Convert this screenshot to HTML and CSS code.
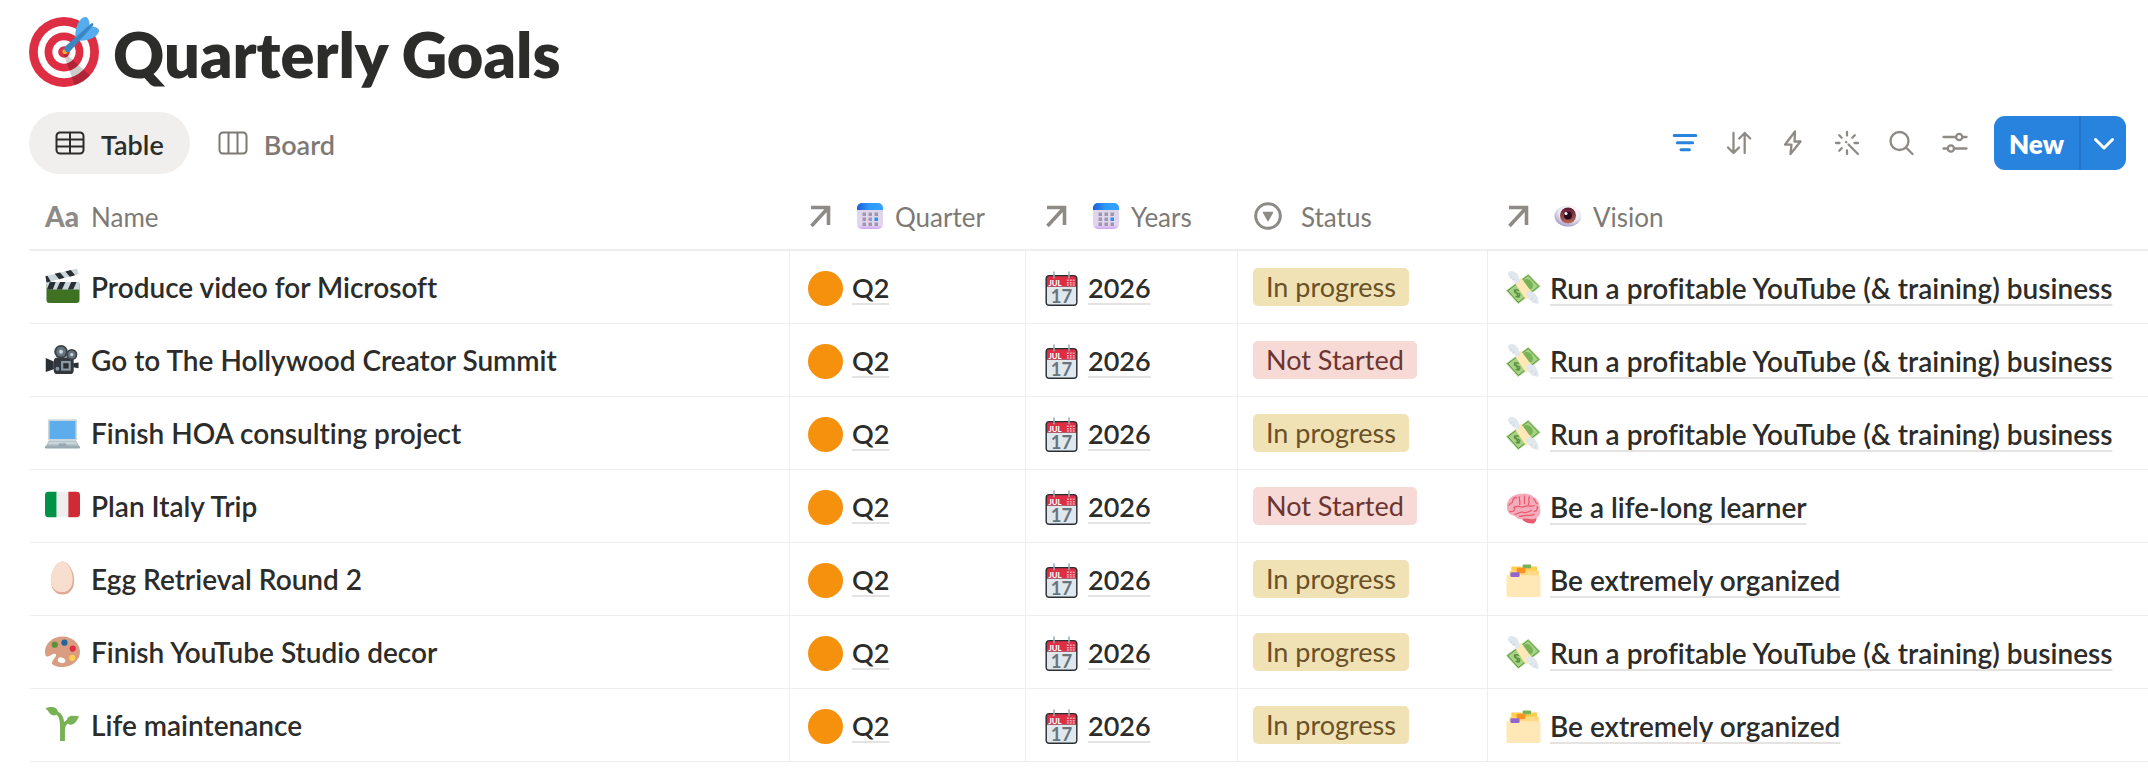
FILE: index.html
```html
<!DOCTYPE html>
<html lang="en">
<head>
    <meta charset="UTF-8">
    <meta name="viewport" content="width=device-width, initial-scale=1.0">
    <title>Quarterly Goals</title>
    <link rel="stylesheet" href="styles.css">
</head>
<body>
    <!-- Shared icons -->
    <svg class="sprite" aria-hidden="true">
        <symbol id="arrow" viewBox="0 0 24 24">
            <path d="M3 3.500H20.500V21M20 4L3.500 22" fill="none" stroke="currentColor" stroke-width="3.600"/>
        </symbol>
        <linearGradient id="calTop"><stop offset="0" stop-color="#1b5fd9"/><stop offset=".5" stop-color="#2d9bfb"/><stop offset="1" stop-color="#35a2ff"/></linearGradient>
        <linearGradient id="calBody" x2="0" y2="1"><stop offset="0" stop-color="#dcd5e8"/><stop offset=".85" stop-color="#e2d6ef"/><stop offset="1" stop-color="#d0a4f2"/></linearGradient>
        <symbol id="cal" viewBox="0 0 28 28">
            <rect x="1" y="1" width="26" height="26" rx="5" fill="url(#calBody)"/>
            <path d="M1 8V6a5 5 0 0 1 5-5h16a5 5 0 0 1 5 5v2z" fill="url(#calTop)"/>
            <path d="M6.500 10.500h3.500v3.500h-3.500zM12.500 10.500h3.500v3.500h-3.500zM18.500 10.500h3.500v3.500h-3.500zM6.500 15.500h3.500v3.500h-3.500zM12.500 15.500h3.500v3.500h-3.500zM6.500 20.500h3.500v3.500h-3.500zM12.500 20.500h3.500v3.500h-3.500zM18.500 20.500h3.500v3.500h-3.500z" fill="#a196b0"/>
            <path d="M18.500 15.500h3.500v3.500h-3.500z" fill="#2593f5"/>
        </symbol>
        <radialGradient id="eyeBall" cx=".6" cy=".3" r=".75"><stop offset="0" stop-color="#fff"/><stop offset=".6" stop-color="#e9e6ef"/><stop offset="1" stop-color="#9d8fc0"/></radialGradient>
        <linearGradient id="iris" x2="0" y2="1"><stop offset="0" stop-color="#5c1831"/><stop offset="1" stop-color="#b8685a"/></linearGradient>
        <symbol id="eye" viewBox="0 0 28 28">
            <ellipse cx="14" cy="14" rx="13.500" ry="10.500" fill="url(#eyeBall)"/>
            <circle cx="14" cy="13.500" r="8" fill="url(#iris)"/>
            <circle cx="14" cy="13.500" r="4" fill="#2a0b1c"/>
            <circle cx="12" cy="11.500" r="1.500" fill="#fff"/>
        </symbol>
        <symbol id="orange" viewBox="0 0 36 36">
            <circle cx="18" cy="18" r="18" fill="#f6910d"/>
        </symbol>
        <symbol id="money" viewBox="0 0 36 36">
            <path d="M23 3L35.500 16 12.500 34 0 20z" fill="#a6d388"/>
            <path d="M22.800 4.600L33.600 15.800 12.700 32.300 1.800 20.200z" fill="none" stroke="#5c913b" stroke-width="1"/>
            <ellipse cx="22.500" cy="13.500" rx="4.500" ry="6" fill="#77b255" transform="rotate(-42 22.500 13.500)"/>
            <path d="M13 20.500c-1.600-2-4.500-1-4.300.8.300 2 3.800.5 5.200 2.500 1.200 2-1.800 4-4 2M8.500 19l5 8.500" fill="none" stroke="#5c913b" stroke-width="1.500"/>
            <path d="M9 12l6.500-5L28 24l-7.500 5.500z" fill="#ffe8b6"/>
            <path d="M2 3c0-2.500 3-3.500 6-2.500 3.500 1 5 4 5.500 6.500.4 1.800 1.500 3 1 4.500-1.500 2.500-4.500 1.500-4.500-.5-2 .5-3.500-.8-3.500-2.500-2 0-3-1.200-2.600-2.600C2.500 5.500 2 4.500 2 3z" fill="#e1e8ed"/>
            <path d="M33.500 33c-1 1.600-3.500 1-4.500-.5-2 .4-3.500-1-3.500-2.700-2 0-3.300-1.400-2.700-3.300-2-.4-2.600-2.500-1.600-4.200 2-2.400 6-1.800 8.300.5 2.500 2.600 4.500 7 4 10.200z" fill="#e1e8ed"/>
            <path d="M4 6.200l3-.4M6.500 8.700l3-.6M25.500 29.800l2-2.500M29 32.300l1.500-2.500" stroke="#ccd6dd" stroke-width="1"/>
        </symbol>
        <symbol id="brain" viewBox="0 0 36 36">
            <path d="M16 29c2 4 7 5.500 11 5.500 3 0 4.500-4 4.500-6z" fill="#ea596e"/>
            <path d="M1 18C0 12 5 6.500 9 5.500 14 3 24 2.500 28 7c4 1.500 7 7 7 12 1.500 5-1 9-5 10.500-5 1.500-9-.5-12 0-4 1.500-7 0-9-3C4 26 1 23 1 18z" fill="#f4abba"/>
            <path d="M3 16c2-4 4-2 4-5 0-2 2-4 4-3M4 22c3 1 5-1 5-3M9 25c3 0 5-3 9-2s6-1 8-2M14 7c-1 3 1 4 0 8M19 6v8M24 7c-2 3 1 5-1 8M28 9c3 1 1 4 4 5M8 18c4-3 7 1 11-1s7 1 10-1M14 27c3 0 4-1 7-1s5 1 8-1M32 17c1 3-1 5-3 5" fill="none" stroke="#ea596e" stroke-width="1.300" stroke-linecap="round"/>
        </symbol>
        <symbol id="folder" viewBox="0 0 36 36">
            <rect x="17" y="1.500" width="9" height="6" rx="1.500" fill="#77b255"/>
            <path d="M5.500 4.500a1 1 0 0 1 1-1H16v2h10v-2h5a1 1 0 0 1 1 1V12H5.500z" fill="#ffcc4d"/>
            <path d="M4.500 8H33a1 1 0 0 1 1 1v5H3.500V9z" fill="#ffd983"/>
            <rect x="11" y="5" width="9" height="5.500" rx="1.500" fill="#f7931e"/>
            <path d="M1 12.500h33.500a1 1 0 0 1 1 1V34a1 1 0 0 1-1 1h-33a1 1 0 0 1-1-1V13z" fill="#ffe8b6"/>
            <rect x="4.500" y="9.500" width="9.500" height="5" rx="1.500" fill="#9266cc"/>
        </symbol>
    </svg>
    <svg class="hidden" aria-hidden="true">
        <symbol id="july" viewBox="0 0 36 36">
            <rect x="1.500" y="4" width="33" height="32" rx="4" fill="#292f33"/>
            <path d="M3 16h30v16.500a2 2 0 0 1-2 2H5a2 2 0 0 1-2-2z" fill="#e1e8ed"/>
            <path d="M3 16V8a2.500 2.500 0 0 1 2.500-2.500h25A2.500 2.500 0 0 1 33 8v8z" fill="#dd2e44"/>
            <path d="M10.300 1v6M25.700 1v6" stroke="#9aaab4" stroke-width="1.600" stroke-linecap="round"/>
            <path d="M23.500 9.500h8M23.500 12h8M23.500 14.500h8" stroke="#f4abb4" stroke-width="1.500" stroke-dasharray="2 1"/>
            <text x="4.500" y="15" class="july-month">JUL</text>
            <text x="18" y="32.500" class="july-day">17</text>
        </symbol>
    </svg>

    <header class="page-title">
        <svg class="title-icon" viewBox="0 0 36 36" aria-hidden="true">
            <circle cx="18" cy="18" r="18" fill="#dd2e44"/>
            <circle cx="18" cy="18" r="13.500" fill="#fff"/>
            <circle cx="18" cy="18" r="10" fill="#dd2e44"/>
            <circle cx="18" cy="18" r="6" fill="#fff"/>
            <circle cx="18" cy="18" r="3" fill="#dd2e44"/>
            <path opacity=".2" d="M18.240 18.280l13.140 11.750s-2.640 3.380-7.890 5.110L17.580 18.420z"/>
            <circle cx="18.500" cy="17.800" r="1.300" fill="#ffac33"/>
            <path fill="#55acee" d="M24.016 6.981c-.403 2.079 0 4.691 0 4.691l7.054-7.388c.291-1.454-.528-3.932-1.718-4.238-1.190-.306-4.079.803-5.336 6.935zm5.003 5.003c-2.079.403-4.691 0-4.691 0l7.388-7.054c1.454-.291 3.932.528 4.238 1.718.306 1.190-.803 4.079-6.935 5.336z"/>
            <path fill="#3a87c2" d="M32.798 4.485L21.176 17.587c-.362.362-1.673.882-2.510.046-.836-.836-.419-2.080-.057-2.443L31.815 3.501s.676-.635 1.159-.152-.176 1.136-.176 1.136z"/>
        </svg>
        <h1>Quarterly Goals</h1>
    </header>

    <nav class="toolbar">
        <button class="tab active">
            <svg viewBox="0 0 30 24"><path d="M5 1.500h20A3.500 3.500 0 0 1 28.500 5v14a3.500 3.500 0 0 1-3.500 3.500H5A3.500 3.500 0 0 1 1.500 19V5A3.500 3.500 0 0 1 5 1.500zM1.500 8.500h27M1.500 15.500h27M15 1.500v21"/></svg>
            <span>Table</span>
        </button>
        <button class="tab">
            <svg viewBox="0 0 30 24"><path d="M5 1.500h20A3.500 3.500 0 0 1 28.500 5v14a3.500 3.500 0 0 1-3.500 3.500H5A3.500 3.500 0 0 1 1.500 19V5A3.500 3.500 0 0 1 5 1.500zM10.500 1.500v21M19.500 1.500v21"/></svg>
            <span>Board</span>
        </button>

        <div class="tools">
            <button class="tool filter" aria-label="Filter">
                <svg viewBox="0 0 26 26"><path d="M2.200 5.500h21.600M5.400 12.700h15.200M9 19.800h8.400"/></svg>
            </button>
            <button class="tool" aria-label="Sort">
                <svg viewBox="0 0 26 26"><path d="M7.500 3v20M2 17.500L7.500 23l5.500-5.500M18.700 23V3M13.200 8.500L18.700 3l5.500 5.500"/></svg>
            </button>
            <button class="tool" aria-label="Automations">
                <svg viewBox="0 0 26 26"><path d="M15 1.500L5 14.700h6.500L10.500 24 20.500 11.500h-6z"/></svg>
            </button>
            <button class="tool" aria-label="AI">
                <svg viewBox="0 0 26 26"><path d="M13 2v3.500M13 20.500V24M2 13h3.500M20.500 13H24M5.200 5.200l2.500 2.500M20.800 5.200l-2.500 2.500M5.200 20.800l2.500-2.500M12 12l.300.300M14.500 14.500l9.500 9.500"/></svg>
            </button>
            <button class="tool" aria-label="Search">
                <svg viewBox="0 0 26 26"><path d="M20.500 11a9 9 0 1 1-18 0 9 9 0 0 1 18 0zM18 17.500l6.500 6.500"/></svg>
            </button>
            <button class="tool" aria-label="View settings">
                <svg viewBox="0 0 26 26"><path d="M1.500 7h12.500M20.500 7h4M1.500 18.500h4M12 18.500h12.500M20.300 7a3.100 3.100 0 1 1-6.200 0 3.100 3.100 0 0 1 6.200 0zM12 18.500a3.100 3.100 0 1 1-6.200 0 3.100 3.100 0 0 1 6.200 0z"/></svg>
            </button>
        </div>

        <div class="new">
            <button class="new-page">New</button>
            <button class="new-more" aria-label="More options">
                <svg viewBox="0 0 22 14"><path d="M2.500 2.500L11 11l8.500-8.500"/></svg>
            </button>
        </div>
    </nav>

    <table class="goals">
        <colgroup>
            <col class="col-name">
            <col class="col-quarter">
            <col class="col-years">
            <col class="col-status">
            <col>
        </colgroup>
        <thead>
            <tr>
                <th><div class="head"><span class="aa">Aa</span><span>Name</span></div></th>
                <th><div class="head"><svg class="prop"><use href="#arrow"/></svg><svg class="head-emoji"><use href="#cal"/></svg><span>Quarter</span></div></th>
                <th><div class="head"><svg class="prop"><use href="#arrow"/></svg><svg class="head-emoji"><use href="#cal"/></svg><span>Years</span></div></th>
                <th><div class="head"><svg class="status-icon" viewBox="0 0 28 28"><circle cx="14" cy="14" r="12.300" fill="none" stroke="currentColor" stroke-width="3"/><path d="M9.500 10.500h9L14 18.500z" fill="currentColor" stroke="currentColor" stroke-width="1.500" stroke-linejoin="round"/></svg><span>Status</span></div></th>
                <th><div class="head"><svg class="prop"><use href="#arrow"/></svg><svg class="head-emoji"><use href="#eye"/></svg><span>Vision</span></div></th>
            </tr>
        </thead>
        <tbody>
            <tr>
                <td>
                    <div class="cell name">
                        <svg viewBox="0 0 36 36">
                            <rect x="1.500" y="14.500" width="34" height="21.500" rx="3" fill="#3f7123"/>
                            <path d="M1.500 14.500h34V22h-34z" fill="#ccd6dd"/>
                            <path d="M5 14.500h6L8 22H2v-.500zM15.500 14.500h5.500L17.500 22H12zM27 14.500h5.500L29 22h-5.500z" fill="#292f33"/>
                            <path d="M.500 8.500L33 .500l1.500 6L4 14.500 1.500 15z" fill="#ccd6dd"/>
                            <path d="M.500 8.500l2-.500L6 14l-4.500 1zM10 6l5.500-1.300L20 10l-5.500 1.500zM21 3.500l5.500-1.500 4.500 5.500-5.500 1.400z" fill="#292f33"/>
                        </svg>
                        Produce video for Microsoft
                    </div>
                </td>
                <td><div class="cell"><svg><use href="#orange"/></svg><a href="#">Q2</a></div></td>
                <td><div class="cell"><svg><use href="#july"/></svg><a href="#">2026</a></div></td>
                <td><span class="tag progress">In progress</span></td>
                <td><div class="cell vision"><svg><use href="#money"/></svg><a href="#">Run a profitable YouTube (&amp; training) business</a></div></td>
            </tr>
            <tr>
                <td>
                    <div class="cell name">
                        <svg viewBox="0 0 36 36">
                            <path d="M.800 17.500L9 21v8L.800 32z" fill="#292f33"/>
                            <path d="M29 23l5.500-1v6L29 27z" fill="#292f33"/>
                            <rect x="9" y="17" width="20.500" height="17" rx="4" fill="#31373d"/>
                            <circle cx="16.500" cy="11" r="7" fill="#3b4248"/>
                            <circle cx="16.500" cy="11" r="5" fill="#66757f"/>
                            <circle cx="16.500" cy="11" r="2" fill="#ccd6dd"/>
                            <circle cx="27.500" cy="14" r="5.800" fill="#3b4248"/>
                            <circle cx="27.500" cy="14" r="4" fill="#66757f"/>
                            <circle cx="27.500" cy="14" r="1.700" fill="#ccd6dd"/>
                            <rect x="16.500" y="20.500" width="10" height="10" fill="#8899a6"/>
                            <rect x="18.800" y="22.800" width="5.500" height="5.500" fill="#292f33"/>
                            <circle cx="12.800" cy="28.500" r="2" fill="#8899a6"/>
                        </svg>
                        Go to The Hollywood Creator Summit
                    </div>
                </td>
                <td><div class="cell"><svg><use href="#orange"/></svg><a href="#">Q2</a></div></td>
                <td><div class="cell"><svg><use href="#july"/></svg><a href="#">2026</a></div></td>
                <td><span class="tag not-started">Not Started</span></td>
                <td><div class="cell vision"><svg><use href="#money"/></svg><a href="#">Run a profitable YouTube (&amp; training) business</a></div></td>
            </tr>
            <tr>
                <td>
                    <div class="cell name">
                        <svg viewBox="0 0 36 36">
                            <rect x="3" y="5.500" width="30" height="22" rx="1.500" fill="#ccd6dd"/>
                            <rect x="4.700" y="7.200" width="26.600" height="18.500" fill="#5dadec"/>
                            <path d="M4 27.500h28l3.500 6H.500z" fill="#aebbc1"/>
                            <path d="M4.500 28.500h27l1.500 2.500H3z" fill="#ccd6dd"/>
                            <path d="M14.500 30h7l1 3h-9z" fill="#9aaab4"/>
                            <rect y="33" width="36" height="2.500" rx="1" fill="#9aaab4"/>
                        </svg>
                        Finish HOA consulting project
                    </div>
                </td>
                <td><div class="cell"><svg><use href="#orange"/></svg><a href="#">Q2</a></div></td>
                <td><div class="cell"><svg><use href="#july"/></svg><a href="#">2026</a></div></td>
                <td><span class="tag progress">In progress</span></td>
                <td><div class="cell vision"><svg><use href="#money"/></svg><a href="#">Run a profitable YouTube (&amp; training) business</a></div></td>
            </tr>
            <tr>
                <td>
                    <div class="cell name">
                        <svg viewBox="0 0 36 36">
                            <path d="M12 5H3.500A3.500 3.500 0 0 0 0 8.500v19A3.500 3.500 0 0 0 3.500 31H12z" fill="#009246"/>
                            <path d="M12 5h12v26H12z" fill="#eee"/>
                            <path d="M24 5h8.500A3.500 3.500 0 0 1 36 8.500v19a3.500 3.500 0 0 1-3.500 3.500H24z" fill="#ce2b37"/>
                        </svg>
                        Plan Italy Trip
                    </div>
                </td>
                <td><div class="cell"><svg><use href="#orange"/></svg><a href="#">Q2</a></div></td>
                <td><div class="cell"><svg><use href="#july"/></svg><a href="#">2026</a></div></td>
                <td><span class="tag not-started">Not Started</span></td>
                <td><div class="cell vision"><svg><use href="#brain"/></svg><a href="#">Be a life-long learner</a></div></td>
            </tr>
            <tr>
                <td>
                    <div class="cell name">
                        <svg viewBox="0 0 36 36">
                            <path d="M18 1.500c6 0 12 10 12 19.500 0 9-5 14.500-12 14.500S6 30 6 21C6 11.500 12 1.500 18 1.500z" fill="#e0aa94"/>
                            <path d="M18 1.500c5.500 0 10.500 9.500 10.500 18.500 0 8-4.500 13-10.800 13S6 29 6 21C6 11.500 12 1.500 18 1.500z" fill="#f7dece"/>
                        </svg>
                        Egg Retrieval Round 2
                    </div>
                </td>
                <td><div class="cell"><svg><use href="#orange"/></svg><a href="#">Q2</a></div></td>
                <td><div class="cell"><svg><use href="#july"/></svg><a href="#">2026</a></div></td>
                <td><span class="tag progress">In progress</span></td>
                <td><div class="cell vision"><svg><use href="#folder"/></svg><a href="#">Be extremely organized</a></div></td>
            </tr>
            <tr>
                <td>
                    <div class="cell name">
                        <svg viewBox="0 0 36 36">
                            <path d="M18 3.500C8 3.500 0 10.500 0 19c0 1.500.300 3.500 1 5 2 1 5-1.500 7.500-2.500 2.500-.800 3.500.500 2.500 2.500-1 2.500-4 4.500-4 7.500 2.500 2.500 6 3.500 11 3.500 10 0 18-7 18-15.700S28 3.500 18 3.500z" fill="#d99e82"/>
                            <ellipse cx="17" cy="28" rx="4" ry="2.800" fill="#fff" transform="rotate(20 17 28)"/>
                            <circle cx="10" cy="12" r="3.200" fill="#5c913b"/>
                            <circle cx="20" cy="10" r="3.200" fill="#226699"/>
                            <circle cx="28.500" cy="16" r="3.200" fill="#dd2e44"/>
                            <circle cx="28" cy="25.500" r="3.200" fill="#ffcc4d"/>
                        </svg>
                        Finish YouTube Studio decor
                    </div>
                </td>
                <td><div class="cell"><svg><use href="#orange"/></svg><a href="#">Q2</a></div></td>
                <td><div class="cell"><svg><use href="#july"/></svg><a href="#">2026</a></div></td>
                <td><span class="tag progress">In progress</span></td>
                <td><div class="cell vision"><svg><use href="#money"/></svg><a href="#">Run a profitable YouTube (&amp; training) business</a></div></td>
            </tr>
            <tr>
                <td>
                    <div class="cell name">
                        <svg viewBox="0 0 36 36">
                            <path d="M15.500 36V22C15.500 12 13 9.500 11.500 9 9 11 5.500 9 4 6.500 3 4.500 1.500 3 .500 2.500 3 .500 9 .300 11.500 2.500c1.500 1.500 1.500 2.500 2 3.500 3.500 1.500 5.500 5 6.200 10.500 1-1 1.800-1.700 3-2.300 0-1.500 1-3 3-3.700 3-1 6.500.500 9.500 0-1 1-1.700 4.500-4.500 7-2.500 2.200-5.500 2.200-7.200.500-2 1.500-3 4-3 7V36z" fill="#77b255"/>
                        </svg>
                        Life maintenance
                    </div>
                </td>
                <td><div class="cell"><svg><use href="#orange"/></svg><a href="#">Q2</a></div></td>
                <td><div class="cell"><svg><use href="#july"/></svg><a href="#">2026</a></div></td>
                <td><span class="tag progress">In progress</span></td>
                <td><div class="cell vision"><svg><use href="#folder"/></svg><a href="#">Be extremely organized</a></div></td>
            </tr>
        </tbody>
    </table>
</body>
</html>
```
FILE: styles.css
```css
* {
    margin: 0;
    padding: 0;
    box-sizing: border-box;
}

body {
    font-family: Lato, 'Noto Sans', sans-serif;
    font-size: 26px;
    line-height: 32px;
    font-variant-ligatures: none;
    color: #2c2c2b;
    background: #fff;
    padding: 17px 0 0 29px;
}

svg {
    display: block;
    flex: none;
}

button {
    border: none;
    background: none;
    font: inherit;
    color: inherit;
    cursor: pointer;
}

.sprite {
    position: absolute;
    width: 0;
    height: 0;
}

.hidden {
    display: none;
}

/* Title */
.page-title {
    display: flex;
    align-items: center;
    gap: 14px;
    height: 70px;
}

.title-icon {
    width: 70px;
    height: 70px;
}

h1 {
    font-size: 63px;
    line-height: 70px;
    font-weight: 800;
    padding-top: 4px;
}

/* Toolbar */
.toolbar {
    display: flex;
    align-items: center;
    gap: 2px;
    margin-top: 25px;
    padding-right: 22px;
}

.tab {
    display: flex;
    align-items: center;
    gap: 16px;
    height: 62px;
    padding: 0 26px;
    border-radius: 31px;
    font-size: 27px;
    font-weight: 600;
    color: #7d7a75;
}

.tab.active {
    background: #f0efed;
    color: #2c2c2b;
}

.tab span {
    padding-top: 4px;
}

.tab svg {
    width: 30px;
    height: 24px;
    fill: none;
    stroke: currentColor;
    stroke-width: 2;
}

.tools {
    display: flex;
    margin-left: auto;
    margin-right: 10px;
}

.tool {
    display: flex;
    align-items: center;
    justify-content: center;
    width: 54px;
    height: 54px;
    color: #8e8b86;
}

.tool.filter {
    color: #2783de;
}

.tool svg {
    width: 26px;
    height: 26px;
    fill: none;
    stroke: currentColor;
    stroke-width: 2.3;
    stroke-linecap: round;
    stroke-linejoin: round;
}

.tool.filter svg {
    stroke-width: 3;
}

.new {
    display: flex;
    height: 54px;
    border-radius: 11px;
    overflow: hidden;
    background: #2783de;
    color: #fff;
}

.new-page {
    width: 87px;
    padding-top: 2px;
    font-weight: 800;
    border-right: 2px solid #2474c7;
}

.new-more {
    display: flex;
    align-items: center;
    justify-content: center;
    width: 45px;
    padding-top: 2px;
}

.new-more svg {
    width: 22px;
    height: 14px;
    fill: none;
    stroke: currentColor;
    stroke-width: 3;
    stroke-linecap: round;
    stroke-linejoin: round;
}

/* Goals table */
.goals {
    width: 100%;
    margin-top: 8px;
    table-layout: fixed;
    border-collapse: separate;
    border-spacing: 0;
}

.col-name {
    width: 761px;
}

.col-quarter {
    width: 236px;
}

.col-years {
    width: 212px;
}

.col-status {
    width: 250px;
}

th {
    height: 69px;
    font-weight: 400;
    text-align: left;
    color: #7d7a75;
    border-bottom: 2px solid #eeeeec;
}

th,
td {
    padding: 0 15px;
    white-space: nowrap;
}

td {
    height: 73px;
    border-bottom: 1px solid #eeeeec;
    border-right: 1px solid #eeeeec;
}

td:last-child {
    border-right: none;
}

.head {
    display: flex;
    align-items: center;
}

.head span {
    padding-top: 2px;
}

.head .aa {
    width: 47px;
    padding: 0 0 0 1px;
    font-size: 28px;
    font-weight: 900;
    color: #8e8b86;
}

.prop {
    width: 24px;
    height: 24px;
    margin: 0 24px 0 3px;
    color: #8e8b86;
}

.head-emoji {
    width: 28px;
    height: 28px;
    margin-right: 11px;
}

.status-icon {
    width: 28px;
    height: 28px;
    margin: 0 19px 0 1px;
    color: #8e8b86;
}

.cell {
    display: flex;
    align-items: center;
    gap: 9px;
    padding: 2px 0 0 3px;
    font-size: 27px;
    font-weight: 600;
}

.cell svg {
    width: 35px;
    height: 35px;
}

.cell.name {
    gap: 11px;
    padding: 0 0 0 1px;
    font-size: 28px;
}

.cell.name svg {
    margin-bottom: 4px;
}

.cell.vision {
    font-size: 28px;
}

.cell a {
    color: inherit;
    text-decoration: underline 2px #e4e3e1;
    text-underline-offset: 5px;
    text-decoration-skip-ink: none;
}

.tag {
    display: inline-block;
    height: 38px;
    padding: 0 13px;
    font-size: 27px;
    line-height: 38px;
    border-radius: 5px;
}

.progress {
    background: #f1e2b6;
    color: #6a5127;
}

.not-started {
    background: #f7d9d5;
    color: #6d3531;
}

.july-month {
    font: 900 8px Lato, sans-serif;
    fill: #fff;
}

.july-day {
    font: 700 19px Lato, sans-serif;
    fill: #66757f;
    text-anchor: middle;
}
```
